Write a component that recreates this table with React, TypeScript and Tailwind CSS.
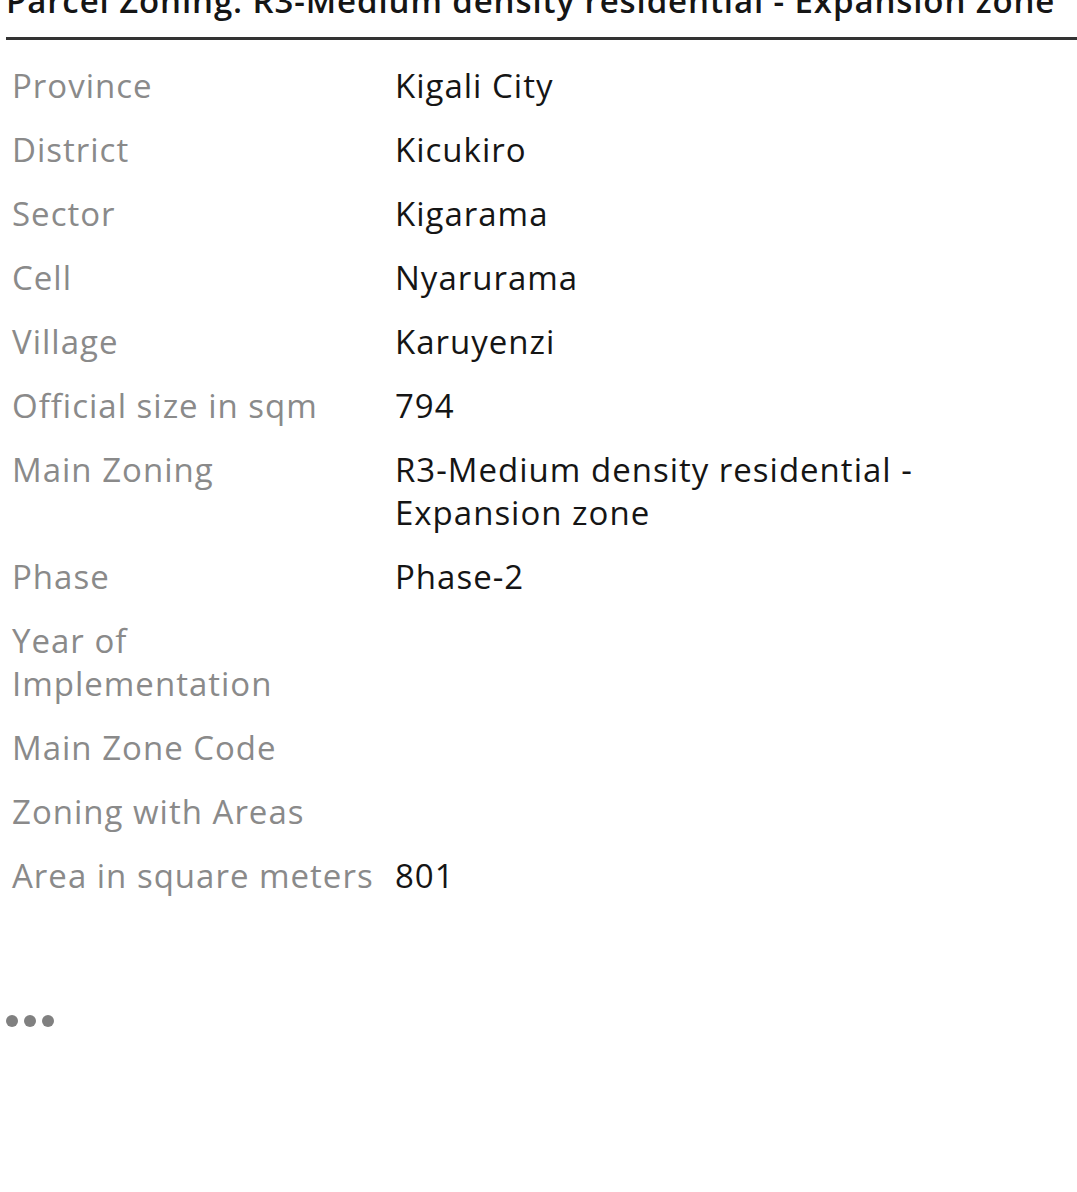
import React from "react";

const rows: [string, string][] = [
  ["Province", "Kigali City"],
  ["District", "Kicukiro"],
  ["Sector", "Kigarama"],
  ["Cell", "Nyarurama"],
  ["Village", "Karuyenzi"],
  ["Official size in sqm", "794"],
  ["Main Zoning", "R3-Medium density residential - Expansion zone"],
  ["Phase", "Phase-2"],
  ["Year of Implementation", ""],
  ["Main Zone Code", ""],
  ["Zoning with Areas", ""],
  ["Area in square meters", "801"],
];

export default function App() {
  return (
    <div className="w-[1077px] h-[1192px] overflow-hidden bg-white" style={{ fontFamily: "'Open Sans', 'Noto Sans', sans-serif" }}>
      <div className="-mt-[21px] pl-[6px]">
        <h2 className="text-[33px] leading-[43px] font-semibold tracking-[0.9px] text-[#151515] whitespace-nowrap">
          Parcel Zoning: R3-Medium density residential - Expansion zone
        </h2>
        <div className="mt-[15px] h-[3px] bg-[#333333]" />
        <table className="mt-[13px] w-[1071px] border-collapse text-[33px] leading-[43px] tracking-[1px]">
          <tbody>
            {rows.map(([label, value]) => (
              <tr key={label}>
                <th className="w-[383px] px-[6px] py-[10.5px] text-left align-top font-normal text-[#8a8a8a]">{label}</th>
                <td className="px-[6px] py-[10.5px] align-top text-[#151515] pr-[150px]">{value}</td>
              </tr>
            ))}
          </tbody>
        </table>
        <div className="mt-[108px] flex gap-[6px]">
          <span className="w-[12px] h-[12px] rounded-full bg-[#808080]" />
          <span className="w-[12px] h-[12px] rounded-full bg-[#808080]" />
          <span className="w-[12px] h-[12px] rounded-full bg-[#808080]" />
        </div>
      </div>
    </div>
  );
}
